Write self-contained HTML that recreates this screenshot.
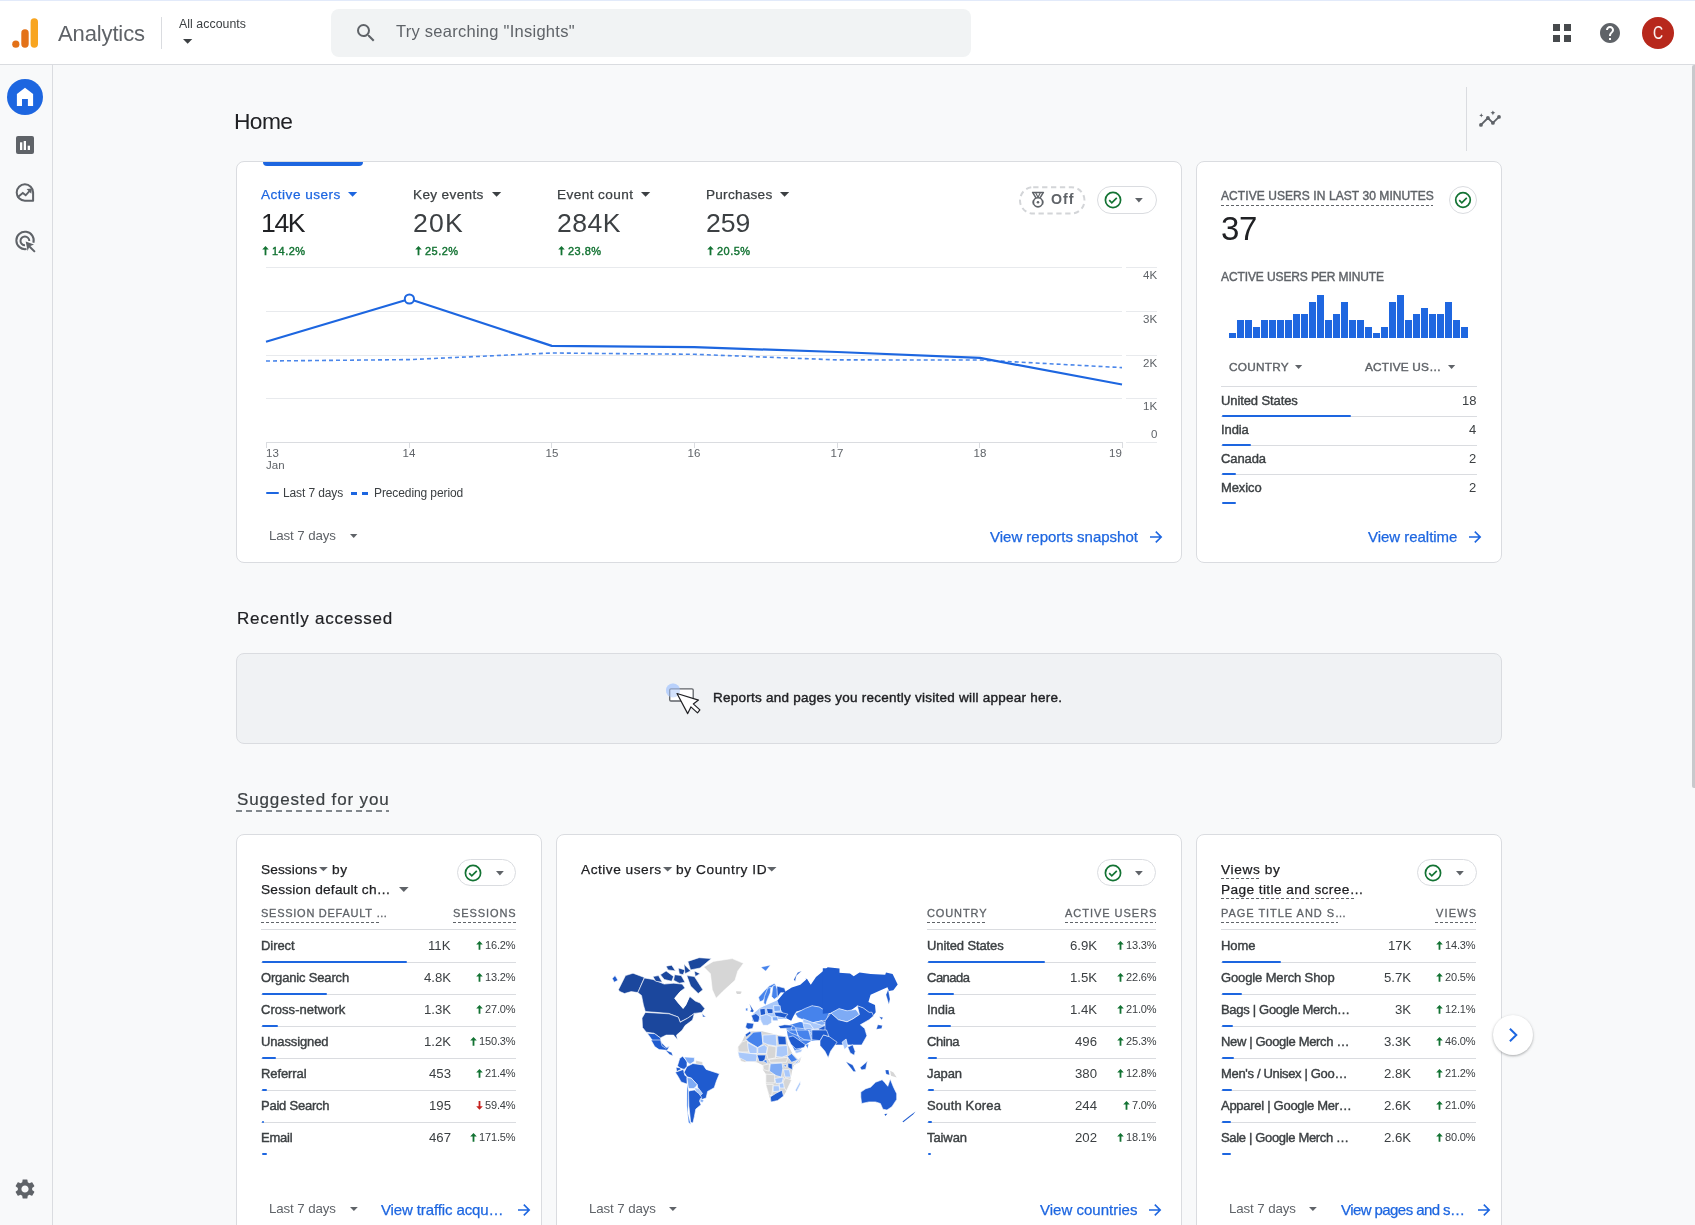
<!DOCTYPE html><html><head><meta charset="utf-8"><style>
html,body{margin:0;padding:0;}
body{width:1695px;height:1225px;overflow:hidden;position:relative;background:#f8f9fa;font-family:"Liberation Sans", sans-serif;}
.a{position:absolute;}
.t{position:absolute;line-height:1;white-space:nowrap;will-change:transform;}
svg{position:absolute;overflow:visible;}
</style></head><body>

<div class="a" style="left:0px;top:0px;width:1695px;height:64px;background:#fff;"></div>
<div class="a" style="left:0px;top:0px;width:1695px;height:1px;background:#e2eafa;"></div>
<div class="a" style="left:0px;top:64px;width:1695px;height:1px;background:#dadce0;"></div>
<svg style="left:0;top:0" width="60" height="64"><circle cx="15.8" cy="44.2" r="3.6" fill="#e37118"/><rect x="21.3" y="29.2" width="7.4" height="18.6" rx="3.7" fill="#e37118"/><rect x="30.6" y="18.2" width="7.4" height="29.6" rx="3.7" fill="#f8a520"/></svg>
<div class="t" style="top:22.88px;font-size:22px;color:#5f6368;letter-spacing:-0.129px;left:57.5px;">Analytics</div>
<div class="a" style="left:161px;top:17px;width:1px;height:32px;background:#dadce0;"></div>
<div class="t" style="top:17.89px;font-size:12.3px;color:#3c4043;letter-spacing:0.062px;left:179.2px;">All accounts</div>
<svg style="left:183.2px;top:38.5px" width="9.3" height="4.8" viewBox="0 0 9.3 4.8"><path d="M0 0H9.3L4.65 4.8z" fill="#3c4043"/></svg>
<div class="a" style="left:331px;top:9px;width:640px;height:48px;background:#f1f3f4;border-radius:8px;"></div>
<svg style="left:354px;top:21px" width="24" height="24" viewBox="0 0 24 24"><path fill="#5f6368" d="M15.5 14h-.79l-.28-.27A6.471 6.471 0 0 0 16 9.5 6.5 6.5 0 1 0 9.5 16c1.61 0 3.09-.59 4.23-1.57l.27.28v.79l5 4.99L20.49 19l-4.99-5zm-6 0C7.01 14 5 11.99 5 9.5S7.01 5 9.5 5 14 7.01 14 9.5 11.99 14 9.5 14z"/></svg>
<div class="t" style="top:22.53px;font-size:16.5px;color:#5f6368;letter-spacing:0.261px;left:395.5px;">Try searching "Insights"</div>
<div class="a" style="left:1553.1px;top:24.1px;width:6.7px;height:6.7px;background:#474a4d;"></div>
<div class="a" style="left:1553.1px;top:35.3px;width:6.7px;height:6.7px;background:#474a4d;"></div>
<div class="a" style="left:1564.3px;top:24.1px;width:6.7px;height:6.7px;background:#474a4d;"></div>
<div class="a" style="left:1564.3px;top:35.3px;width:6.7px;height:6.7px;background:#474a4d;"></div>
<svg style="left:1598px;top:21px" width="24" height="24" viewBox="0 0 24 24"><path fill="#5f6368" d="M12 2C6.48 2 2 6.48 2 12s4.48 10 10 10 10-4.48 10-10S17.52 2 12 2zm1 17h-2v-2h2v2zm2.07-7.75l-.9.92C13.45 12.9 13 13.5 13 15h-2v-.5c0-1.1.45-2.1 1.17-2.83l1.24-1.26c.37-.36.59-.86.59-1.41 0-1.1-.9-2-2-2s-2 .9-2 2H8c0-2.21 1.79-4 4-4s4 1.79 4 4c0 .88-.36 1.68-.93 2.25z"/></svg>
<div class="a" style="left:1642px;top:17px;width:32px;height:32px;background:#b7281c;border-radius:50%;"></div>
<div class="t" style="top:24.89px;font-size:17.5px;color:#fff;left:1458px;width:400px;text-align:center;transform:scaleX(0.8);">C</div>
<div class="a" style="left:52px;top:65px;width:1px;height:1160px;background:#dadce0;"></div>
<div class="a" style="left:7px;top:79px;width:36px;height:36px;background:#1d66e0;border-radius:50%;"></div>
<svg style="left:13px;top:85px" width="24" height="24" viewBox="0 0 24 24"><path fill="#fff" d="M3.9 21.1V9l8.1-6.2L20.1 9v12.1H14.9V14H9v7.1z"/></svg>
<svg style="left:13px;top:133px" width="24" height="24" viewBox="0 0 24 24"><rect x="3" y="3" width="18" height="18" rx="2" fill="#5f6368"/><rect x="7" y="9.3" width="2.3" height="7.7" fill="#fff"/><rect x="10.7" y="8" width="2.3" height="9" fill="#fff"/><rect x="14.7" y="12.7" width="2.3" height="4.3" fill="#fff"/></svg>
<svg style="left:13px;top:181px" width="24" height="24" viewBox="0 0 24 24"><path fill="none" stroke="#5f6368" stroke-width="2" stroke-linejoin="round" d="M11.9 19.7A8.2 8.2 0 1 1 20.1 11.5V19.7Z"/><path fill="none" stroke="#5f6368" stroke-width="1.9" d="M4.3 16.4L9.8 12l2.9 2.3 4.6-5.2"/><path fill="#5f6368" d="M18.9 7.4L13.6 8.1L18.3 12.8z"/></svg>
<svg style="left:13px;top:229px" width="24" height="24" viewBox="0 0 24 24"><path fill="none" stroke="#5f6368" stroke-width="2" d="M20.4 13.8A8.7 8.7 0 1 0 13.5 20"/><path fill="none" stroke="#5f6368" stroke-width="2" d="M16.3 12A4.4 4.4 0 1 0 12 16.3"/><path fill="#5f6368" d="M12.7 12.6L21 15.6 17.4 17 22.6 22.2 21.2 23.6 16 18.4 14.6 22z"/></svg>
<svg style="left:13px;top:1177px" width="24" height="24" viewBox="0 0 24 24"><path fill="#5f6368" d="M19.14 12.94c.04-.3.06-.61.06-.94 0-.32-.02-.64-.07-.94l2.03-1.58a.49.49 0 0 0 .12-.61l-1.920-3.32a.488.488 0 0 0-.59-.22l-2.39.96c-.5-.38-1.03-.7-1.62-.94l-.36-2.54a.484.484 0 0 0-.48-.41h-3.84c-.24 0-.43.17-.47.41l-.36 2.54c-.59.24-1.130.57-1.62.94l-2.39-.96c-.22-.08-.47 0-.59.22L2.74 8.87c-.12.21-.08.47.12.61l2.03 1.58c-.05.3-.09.63-.09.94s.02.64.07.94l-2.03 1.58a.49.49 0 0 0-.12.61l1.92 3.32c.12.22.37.29.59.22l2.39-.96c.5.38 1.03.7 1.62.94l.36 2.54c.05.24.24.41.48.41h3.84c.24 0 .44-.17.47-.41l.36-2.54c.59-.24 1.13-.56 1.62-.94l2.39.96c.22.08.47 0 .59-.22l1.92-3.32c.12-.22.07-.47-.12-.61l-2.010-1.58zM12 15.6c-1.98 0-3.6-1.62-3.6-3.6s1.62-3.6 3.6-3.6 3.6 1.62 3.6 3.6-1.62 3.6-3.6 3.6z"/></svg>
<div class="a" style="left:1691.5px;top:65px;width:3.5px;height:723px;background:#c8c9cc;border-radius:2px 0 0 2px;"></div>
<div class="t" style="top:110.40px;font-size:22.8px;color:#202124;letter-spacing:-0.605px;left:233.5px;">Home</div>
<div class="a" style="left:1466px;top:87px;width:1px;height:64px;background:#dadce0;"></div>
<svg style="left:1476px;top:108px" width="28" height="22" viewBox="0 0 28 22"><path fill="none" stroke="#5f6368" stroke-width="1.8" stroke-linejoin="round" d="M4.95 16.96L11.9 10l5 4.9 6.1-6"/><circle cx="4.95" cy="16.96" r="1.9" fill="#5f6368"/><circle cx="11.9" cy="10" r="1.9" fill="#5f6368"/><circle cx="16.9" cy="14.9" r="1.9" fill="#5f6368"/><circle cx="23" cy="8.9" r="1.9" fill="#5f6368"/><path fill="#5f6368" d="M5.3 5.3l.6 1.5 1.5.6-1.5.6-.6 1.5-.6-1.5-1.5-.6 1.5-.6z"/><path fill="#5f6368" d="M16.9 2.4l.8 1.6 1.6.8-1.6.8-.8 1.6-.8-1.6-1.6-.8 1.6-.8z"/></svg>
<div class="a" style="left:236px;top:161px;width:946px;height:402px;background:#fff;border:1px solid #dadce0;border-radius:8px;box-sizing:border-box;"></div>
<div class="a" style="left:263px;top:162px;width:100px;height:4px;background:#1d66e0;border-radius:0 0 4px 4px;"></div>
<div class="t" style="top:187.79px;font-size:13.6px;color:#1d66e0;-webkit-text-stroke:0.25px #1d66e0;letter-spacing:0.485px;left:261px;">Active users</div>
<svg style="left:348px;top:192.2px" width="9.2" height="4.8" viewBox="0 0 9.2 4.8"><path d="M0 0H9.2L4.6 4.8z" fill="#1d66e0"/></svg>
<div class="t" style="top:210.28px;font-size:26.6px;color:#202124;letter-spacing:-1.364px;left:261px;">14K</div>
<svg style="left:262.2px;top:246.4px" width="7" height="9.2" viewBox="0 0 7 9.2"><path fill="#137333" d="M3.5 0L6.8 3.6H4.4V9.2H2.6V3.6H0.2z"/></svg>
<div class="t" style="top:245.59px;font-size:11px;color:#137333;-webkit-text-stroke:0.4px #137333;letter-spacing:0.453px;left:272.4px;">14.2%</div>
<div class="t" style="top:187.79px;font-size:13.6px;color:#3c4043;-webkit-text-stroke:0.25px #3c4043;letter-spacing:0.347px;left:413.4px;">Key events</div>
<svg style="left:492px;top:192.2px" width="9.2" height="4.8" viewBox="0 0 9.2 4.8"><path d="M0 0H9.2L4.6 4.8z" fill="#3c4043"/></svg>
<div class="t" style="top:210.28px;font-size:26.6px;color:#3c4043;letter-spacing:1.236px;left:413.4px;">20K</div>
<svg style="left:414.59999999999997px;top:246.4px" width="7" height="9.2" viewBox="0 0 7 9.2"><path fill="#137333" d="M3.5 0L6.8 3.6H4.4V9.2H2.6V3.6H0.2z"/></svg>
<div class="t" style="top:245.59px;font-size:11px;color:#137333;-webkit-text-stroke:0.4px #137333;letter-spacing:0.453px;left:424.79999999999995px;">25.2%</div>
<div class="t" style="top:187.79px;font-size:13.6px;color:#3c4043;-webkit-text-stroke:0.25px #3c4043;letter-spacing:0.418px;left:556.9px;">Event count</div>
<svg style="left:640.7px;top:192.2px" width="9.2" height="4.8" viewBox="0 0 9.2 4.8"><path d="M0 0H9.2L4.6 4.8z" fill="#3c4043"/></svg>
<div class="t" style="top:210.28px;font-size:26.6px;color:#3c4043;letter-spacing:0.494px;left:556.9px;">284K</div>
<svg style="left:558.1px;top:246.4px" width="7" height="9.2" viewBox="0 0 7 9.2"><path fill="#137333" d="M3.5 0L6.8 3.6H4.4V9.2H2.6V3.6H0.2z"/></svg>
<div class="t" style="top:245.59px;font-size:11px;color:#137333;-webkit-text-stroke:0.4px #137333;letter-spacing:0.453px;left:568.3px;">23.8%</div>
<div class="t" style="top:187.79px;font-size:13.6px;color:#3c4043;-webkit-text-stroke:0.25px #3c4043;letter-spacing:0.244px;left:706px;">Purchases</div>
<svg style="left:780px;top:192.2px" width="9.2" height="4.8" viewBox="0 0 9.2 4.8"><path d="M0 0H9.2L4.6 4.8z" fill="#3c4043"/></svg>
<div class="t" style="top:210.28px;font-size:26.6px;color:#3c4043;letter-spacing:0.012px;left:706px;">259</div>
<svg style="left:707.2px;top:246.4px" width="7" height="9.2" viewBox="0 0 7 9.2"><path fill="#137333" d="M3.5 0L6.8 3.6H4.4V9.2H2.6V3.6H0.2z"/></svg>
<div class="t" style="top:245.59px;font-size:11px;color:#137333;-webkit-text-stroke:0.4px #137333;letter-spacing:0.453px;left:717.4px;">20.5%</div>
<svg style="left:1015px;top:182px" width="80" height="36" viewBox="0 0 80 36"><rect x="5" y="5.2" width="64.5" height="26.4" rx="13.2" fill="none" stroke="#d3d5d8" stroke-width="2" stroke-dasharray="5.3 3.6"/></svg>
<svg style="left:1029px;top:190px" width="18" height="18" viewBox="0 0 18 18"><path d="M3.6 2.4h10.8L10.6 8.6H7.4z" fill="none" stroke="#5f6368" stroke-width="1.5" stroke-linejoin="round"/><path d="M6.6 2.6L9 7.4 11.4 2.6" fill="none" stroke="#5f6368" stroke-width="1.2"/><circle cx="9" cy="12.3" r="4.6" fill="#fff" stroke="#5f6368" stroke-width="1.6"/><path d="M4.4 10.2a5.5 5.5 0 0 0 0 4.2M13.6 10.2a5.5 5.5 0 0 1 0 4.2" fill="none" stroke="#5f6368" stroke-width="1.2"/><circle cx="9" cy="12.3" r="1.3" fill="#5f6368"/></svg>
<div class="t" style="top:192.28px;font-size:14.2px;color:#5f6368;font-weight:700;letter-spacing:1.049px;left:1051.3px;">Off</div>
<div class="a" style="left:1097.1px;top:186.2px;width:59.5px;height:27.4px;border:1px solid #dadce0;border-radius:14px;box-sizing:border-box;background:#fff;"></div>
<svg style="left:1103.1px;top:189.89999999999998px" width="20" height="20" viewBox="0 0 20 20"><circle cx="10" cy="10" r="7.6" fill="none" stroke="#137333" stroke-width="1.7"/><path d="M6.2 10.2l2.6 2.6 5-5" fill="none" stroke="#137333" stroke-width="1.7"/></svg>
<svg style="left:1135.3999999999999px;top:198.0px" width="7.8" height="4.4" viewBox="0 0 7.8 4.4"><path d="M0 0H7.8L3.9 4.4z" fill="#5f6368"/></svg>
<div class="a" style="left:266px;top:266.9px;width:856px;height:1px;background:#e8eaed;"></div>
<div class="a" style="left:1126px;top:266.9px;width:31px;height:1px;background:#e8eaed;"></div>
<div class="a" style="left:266px;top:310.7px;width:856px;height:1px;background:#e8eaed;"></div>
<div class="a" style="left:1126px;top:310.7px;width:31px;height:1px;background:#e8eaed;"></div>
<div class="a" style="left:266px;top:354.6px;width:856px;height:1px;background:#e8eaed;"></div>
<div class="a" style="left:1126px;top:354.6px;width:31px;height:1px;background:#e8eaed;"></div>
<div class="a" style="left:266px;top:398.0px;width:856px;height:1px;background:#e8eaed;"></div>
<div class="a" style="left:1126px;top:398.0px;width:31px;height:1px;background:#e8eaed;"></div>
<div class="a" style="left:266px;top:441.7px;width:856px;height:1px;background:#dadce0;"></div>
<div class="a" style="left:1126px;top:441.7px;width:31px;height:1px;background:#e8eaed;"></div>
<div class="t" style="top:269.77px;font-size:11.5px;color:#5f6368;right:538.00px;text-align:right;">4K</div>
<div class="t" style="top:313.77px;font-size:11.5px;color:#5f6368;right:538.00px;text-align:right;">3K</div>
<div class="t" style="top:357.77px;font-size:11.5px;color:#5f6368;right:538.00px;text-align:right;">2K</div>
<div class="t" style="top:401.27px;font-size:11.5px;color:#5f6368;right:538.00px;text-align:right;">1K</div>
<div class="t" style="top:429.07px;font-size:11.5px;color:#5f6368;right:538.00px;text-align:right;">0</div>
<div class="a" style="left:265.5px;top:442px;width:1px;height:5.5px;background:#dadce0;"></div>
<div class="a" style="left:408.9px;top:442px;width:1px;height:5.5px;background:#dadce0;"></div>
<div class="a" style="left:551.3px;top:442px;width:1px;height:5.5px;background:#dadce0;"></div>
<div class="a" style="left:693.9px;top:442px;width:1px;height:5.5px;background:#dadce0;"></div>
<div class="a" style="left:836.8px;top:442px;width:1px;height:5.5px;background:#dadce0;"></div>
<div class="a" style="left:979.4px;top:442px;width:1px;height:5.5px;background:#dadce0;"></div>
<div class="a" style="left:1121.5px;top:442px;width:1px;height:5.5px;background:#dadce0;"></div>
<div class="t" style="top:448.07px;font-size:11.5px;color:#5f6368;left:266px;">13</div>
<div class="t" style="top:448.07px;font-size:11.5px;color:#5f6368;left:209.39999999999998px;width:400px;text-align:center;">14</div>
<div class="t" style="top:448.07px;font-size:11.5px;color:#5f6368;left:351.79999999999995px;width:400px;text-align:center;">15</div>
<div class="t" style="top:448.07px;font-size:11.5px;color:#5f6368;left:494.4px;width:400px;text-align:center;">16</div>
<div class="t" style="top:448.07px;font-size:11.5px;color:#5f6368;left:637.3px;width:400px;text-align:center;">17</div>
<div class="t" style="top:448.07px;font-size:11.5px;color:#5f6368;left:779.9px;width:400px;text-align:center;">18</div>
<div class="t" style="top:448.07px;font-size:11.5px;color:#5f6368;right:573.00px;text-align:right;">19</div>
<div class="t" style="top:460.27px;font-size:11.5px;color:#5f6368;left:266px;">Jan</div>
<svg style="left:0;top:0" width="1695" height="1225"><polyline points="266,361 409.4,359.6 551.8,353 694.4,354.3 837.3,359.9 979.9,360 1122,367.6" fill="none" stroke="#4a86ea" stroke-width="1.6" stroke-dasharray="4,3"/><polyline points="266,341.7 409.4,299 551.8,345.9 694.4,347.2 837.3,352 979.9,357.9 1122,384.5" fill="none" stroke="#1d66e0" stroke-width="2.2" stroke-linejoin="round"/><circle cx="409.4" cy="299" r="4.6" fill="#fff" stroke="#1d66e0" stroke-width="2"/></svg>
<div class="a" style="left:266px;top:492.2px;width:13.2px;height:2.3px;background:#1d66e0;border-radius:1px;"></div>
<div class="t" style="top:486.64px;font-size:12px;color:#3c4043;letter-spacing:-0.117px;left:283px;">Last 7 days</div>
<div class="a" style="left:351px;top:492px;width:5.6px;height:2.6px;background:#1d66e0;"></div>
<div class="a" style="left:362.2px;top:492px;width:5.6px;height:2.6px;background:#1d66e0;"></div>
<div class="t" style="top:486.64px;font-size:12px;color:#3c4043;letter-spacing:-0.101px;left:374.4px;">Preceding period</div>
<div class="t" style="top:528.74px;font-size:13.3px;color:#5f6368;letter-spacing:-0.111px;left:269.1px;">Last 7 days</div>
<svg style="left:350.2px;top:534px" width="7.4" height="4" viewBox="0 0 7.4 4"><path d="M0 0H7.4L3.7 4z" fill="#5f6368"/></svg>
<div class="t" style="top:528.90px;font-size:15px;color:#1d66e0;-webkit-text-stroke:0.25px #1d66e0;letter-spacing:-0.011px;left:989.6px;">View reports snapshot</div>
<svg style="left:1149px;top:529.5px" width="14" height="14" viewBox="0 0 14 14"><path d="M1 7h11.2M6.8 1.6L12.2 7l-5.4 5.4" fill="none" stroke="#1d66e0" stroke-width="1.6"/></svg>
<div class="a" style="left:1196px;top:161px;width:306px;height:402px;background:#fff;border:1px solid #dadce0;border-radius:8px;box-sizing:border-box;"></div>
<div class="t" style="top:190.34px;font-size:12px;color:#5f6368;-webkit-text-stroke:0.4px #5f6368;letter-spacing:0.077px;left:1221px;">ACTIVE USERS IN LAST 30 MINUTES</div>
<div class="a" style="left:1221px;top:204.8px;width:212px;height:1.2px;background-image:linear-gradient(90deg,#5f6368 3px,transparent 3px);background-size:5px 1.2px;"></div>
<div class="a" style="left:1449px;top:186px;width:28px;height:28px;border:1px solid #dadce0;border-radius:50%;box-sizing:border-box;background:#fff;"></div>
<svg style="left:1453px;top:190px" width="20" height="20" viewBox="0 0 20 20"><circle cx="10" cy="10" r="7.3" fill="none" stroke="#137333" stroke-width="1.7"/><path d="M6.2 10.2l2.6 2.6 5-5" fill="none" stroke="#137333" stroke-width="1.7"/></svg>
<div class="t" style="top:212.37px;font-size:33px;color:#202124;letter-spacing:-0.302px;left:1220.9px;">37</div>
<div class="t" style="top:271.14px;font-size:12px;color:#5f6368;-webkit-text-stroke:0.4px #5f6368;letter-spacing:-0.107px;left:1221px;">ACTIVE USERS PER MINUTE</div>
<div class="a" style="left:1229px;top:333.0px;width:7px;height:5.0px;background:#1f67e0;"></div>
<div class="a" style="left:1237px;top:320.4px;width:7px;height:17.599999999999998px;background:#1f67e0;"></div>
<div class="a" style="left:1245px;top:320.4px;width:7px;height:17.599999999999998px;background:#1f67e0;"></div>
<div class="a" style="left:1253px;top:326.7px;width:7px;height:11.299999999999999px;background:#1f67e0;"></div>
<div class="a" style="left:1261px;top:320.4px;width:7px;height:17.599999999999998px;background:#1f67e0;"></div>
<div class="a" style="left:1269px;top:320.4px;width:7px;height:17.599999999999998px;background:#1f67e0;"></div>
<div class="a" style="left:1277px;top:320.4px;width:7px;height:17.599999999999998px;background:#1f67e0;"></div>
<div class="a" style="left:1285px;top:320.4px;width:7px;height:17.599999999999998px;background:#1f67e0;"></div>
<div class="a" style="left:1293px;top:314.1px;width:7px;height:23.9px;background:#1f67e0;"></div>
<div class="a" style="left:1301px;top:314.1px;width:7px;height:23.9px;background:#1f67e0;"></div>
<div class="a" style="left:1309px;top:301.5px;width:7px;height:36.5px;background:#1f67e0;"></div>
<div class="a" style="left:1317px;top:295.2px;width:7px;height:42.800000000000004px;background:#1f67e0;"></div>
<div class="a" style="left:1325px;top:320.4px;width:7px;height:17.599999999999998px;background:#1f67e0;"></div>
<div class="a" style="left:1333px;top:314.1px;width:7px;height:23.9px;background:#1f67e0;"></div>
<div class="a" style="left:1341px;top:301.5px;width:7px;height:36.5px;background:#1f67e0;"></div>
<div class="a" style="left:1349px;top:320.4px;width:7px;height:17.599999999999998px;background:#1f67e0;"></div>
<div class="a" style="left:1357px;top:320.4px;width:7px;height:17.599999999999998px;background:#1f67e0;"></div>
<div class="a" style="left:1365px;top:326.7px;width:7px;height:11.299999999999999px;background:#1f67e0;"></div>
<div class="a" style="left:1373px;top:333.0px;width:7px;height:5.0px;background:#1f67e0;"></div>
<div class="a" style="left:1381px;top:326.7px;width:7px;height:11.299999999999999px;background:#1f67e0;"></div>
<div class="a" style="left:1389px;top:301.5px;width:7px;height:36.5px;background:#1f67e0;"></div>
<div class="a" style="left:1397px;top:295.2px;width:7px;height:42.800000000000004px;background:#1f67e0;"></div>
<div class="a" style="left:1405px;top:320.4px;width:7px;height:17.599999999999998px;background:#1f67e0;"></div>
<div class="a" style="left:1413px;top:314.1px;width:7px;height:23.9px;background:#1f67e0;"></div>
<div class="a" style="left:1421px;top:307.8px;width:7px;height:30.2px;background:#1f67e0;"></div>
<div class="a" style="left:1429px;top:314.1px;width:7px;height:23.9px;background:#1f67e0;"></div>
<div class="a" style="left:1437px;top:314.1px;width:7px;height:23.9px;background:#1f67e0;"></div>
<div class="a" style="left:1445px;top:301.5px;width:7px;height:36.5px;background:#1f67e0;"></div>
<div class="a" style="left:1453px;top:320.4px;width:7px;height:17.599999999999998px;background:#1f67e0;"></div>
<div class="a" style="left:1461px;top:326.7px;width:7px;height:11.299999999999999px;background:#1f67e0;"></div>
<div class="t" style="top:361.81px;font-size:11.8px;color:#5f6368;-webkit-text-stroke:0.4px #5f6368;letter-spacing:0.245px;left:1228.7px;">COUNTRY</div>
<svg style="left:1295px;top:365.2px" width="7.2" height="4" viewBox="0 0 7.2 4"><path d="M0 0H7.2L3.6 4z" fill="#5f6368"/></svg>
<div class="t" style="top:361.81px;font-size:11.8px;color:#5f6368;-webkit-text-stroke:0.4px #5f6368;letter-spacing:0.212px;left:1364.8px;">ACTIVE US…</div>
<svg style="left:1448px;top:365.2px" width="7.2" height="4" viewBox="0 0 7.2 4"><path d="M0 0H7.2L3.6 4z" fill="#5f6368"/></svg>
<div class="a" style="left:1221px;top:386px;width:256px;height:1px;background:#dadce0;"></div>
<div class="t" style="top:394.10px;font-size:13px;color:#3c4043;-webkit-text-stroke:0.4px #3c4043;letter-spacing:-0.100px;left:1221px;">United States</div>
<div class="t" style="top:394.10px;font-size:13px;color:#3c4043;right:218.50px;text-align:right;">18</div>
<div class="a" style="left:1221px;top:416.0px;width:256px;height:1px;background:#dadce0;"></div>
<div class="a" style="left:1222px;top:415.3px;width:128.5px;height:2px;background:#1d66e0;border-radius:1px;"></div>
<div class="t" style="top:423.10px;font-size:13px;color:#3c4043;-webkit-text-stroke:0.4px #3c4043;letter-spacing:-0.100px;left:1221px;">India</div>
<div class="t" style="top:423.10px;font-size:13px;color:#3c4043;right:218.50px;text-align:right;">4</div>
<div class="a" style="left:1221px;top:445.0px;width:256px;height:1px;background:#dadce0;"></div>
<div class="a" style="left:1222px;top:444.3px;width:28.5px;height:2px;background:#1d66e0;border-radius:1px;"></div>
<div class="t" style="top:452.10px;font-size:13px;color:#3c4043;-webkit-text-stroke:0.4px #3c4043;letter-spacing:-0.100px;left:1221px;">Canada</div>
<div class="t" style="top:452.10px;font-size:13px;color:#3c4043;right:218.50px;text-align:right;">2</div>
<div class="a" style="left:1221px;top:474.0px;width:256px;height:1px;background:#dadce0;"></div>
<div class="a" style="left:1222px;top:473.3px;width:14px;height:2px;background:#1d66e0;border-radius:1px;"></div>
<div class="t" style="top:481.10px;font-size:13px;color:#3c4043;-webkit-text-stroke:0.4px #3c4043;letter-spacing:-0.100px;left:1221px;">Mexico</div>
<div class="t" style="top:481.10px;font-size:13px;color:#3c4043;right:218.50px;text-align:right;">2</div>
<div class="a" style="left:1222px;top:502.3px;width:14px;height:2px;background:#1d66e0;border-radius:1px;"></div>
<div class="t" style="top:528.90px;font-size:15px;color:#1d66e0;-webkit-text-stroke:0.25px #1d66e0;letter-spacing:-0.029px;left:1367.9px;">View realtime</div>
<svg style="left:1468px;top:529.5px" width="14" height="14" viewBox="0 0 14 14"><path d="M1 7h11.2M6.8 1.6L12.2 7l-5.4 5.4" fill="none" stroke="#1d66e0" stroke-width="1.6"/></svg>
<div class="t" style="top:610.21px;font-size:17px;color:#202124;-webkit-text-stroke:0.2px #202124;letter-spacing:0.789px;left:237.2px;">Recently accessed</div>
<div class="a" style="left:236px;top:653px;width:1266px;height:91px;background:#f0f2f4;border:1px solid #dadce0;border-radius:8px;box-sizing:border-box;"></div>
<svg style="left:650px;top:670px" width="80" height="60" viewBox="0 0 80 60"><circle cx="23" cy="20.5" r="7" fill="#c6dafc"/><rect x="19.7" y="18.8" width="23.5" height="12.2" rx="1.3" fill="#fff" stroke="#5f6368" stroke-width="1.3"/><circle cx="23" cy="20.5" r="7" fill="#aecbfa" opacity="0.55"/><path d="M27 23.5l21.5 6.6-5.2 3.8 6.6 6-2.4 3-6.6-6-3.2 6.7z" fill="#fff" stroke="#202124" stroke-width="1.2" stroke-linejoin="round"/></svg>
<div class="t" style="top:691.37px;font-size:13.5px;color:#202124;-webkit-text-stroke:0.4px #202124;letter-spacing:0.247px;left:712.5px;">Reports and pages you recently visited will appear here.</div>
<div class="t" style="top:791.11px;font-size:17px;color:#3c4043;-webkit-text-stroke:0.2px #3c4043;letter-spacing:0.858px;left:237.2px;">Suggested for you</div>
<div class="a" style="left:236.1px;top:810.2px;width:153px;height:1.6px;background-image:linear-gradient(90deg,#80868b 6px,transparent 6px);background-size:10px 1.6px;"></div>
<div class="a" style="left:236px;top:834px;width:306px;height:400px;background:#fff;border:1px solid #dadce0;border-radius:8px;box-sizing:border-box;"></div>
<div class="t" style="top:863.00px;font-size:13.7px;color:#202124;-webkit-text-stroke:0.25px #202124;letter-spacing:0.087px;left:260.9px;">Sessions</div>
<svg style="left:318.7px;top:867.4px" width="8.8" height="4.3" viewBox="0 0 8.8 4.3"><path d="M0 0H8.8L4.4 4.3z" fill="#5f6368"/></svg>
<div class="t" style="top:863.00px;font-size:13.7px;color:#202124;-webkit-text-stroke:0.25px #202124;letter-spacing:0.732px;left:331.8px;">by</div>
<div class="t" style="top:882.90px;font-size:13.7px;color:#202124;-webkit-text-stroke:0.25px #202124;letter-spacing:0.214px;left:260.9px;">Session default ch…</div>
<svg style="left:399.1px;top:886.8px" width="9.6" height="5" viewBox="0 0 9.6 5"><path d="M0 0H9.6L4.8 5z" fill="#5f6368"/></svg>
<div class="a" style="left:457.2px;top:859.3px;width:59.3px;height:27.2px;border:1px solid #dadce0;border-radius:14px;box-sizing:border-box;background:#fff;"></div>
<svg style="left:463.2px;top:862.9px" width="20" height="20" viewBox="0 0 20 20"><circle cx="10" cy="10" r="7.6" fill="none" stroke="#137333" stroke-width="1.7"/><path d="M6.2 10.2l2.6 2.6 5-5" fill="none" stroke="#137333" stroke-width="1.7"/></svg>
<svg style="left:495.5px;top:871.0999999999999px" width="7.8" height="4.4" viewBox="0 0 7.8 4.4"><path d="M0 0H7.8L3.9 4.4z" fill="#5f6368"/></svg>
<div class="t" style="top:908.19px;font-size:11px;color:#5f6368;-webkit-text-stroke:0.3px #5f6368;letter-spacing:0.737px;left:260.9px;">SESSION DEFAULT …</div>
<div class="a" style="left:260.9px;top:921.8px;width:118.3px;height:1.2px;background-image:linear-gradient(90deg,#5f6368 3px,transparent 3px);background-size:5px 1.2px;"></div>
<div class="t" style="top:908.19px;font-size:11px;color:#5f6368;-webkit-text-stroke:0.3px #5f6368;letter-spacing:0.908px;right:1178.09px;text-align:right;">SESSIONS</div>
<div class="a" style="left:453px;top:921.8px;width:63px;height:1.2px;background-image:linear-gradient(90deg,#5f6368 3px,transparent 3px);background-size:5px 1.2px;"></div>
<div class="a" style="left:260.9px;top:929px;width:255.10000000000002px;height:1px;background:#dadce0;"></div>
<div class="t" style="top:939.20px;font-size:13px;color:#3c4043;-webkit-text-stroke:0.4px #3c4043;letter-spacing:-0.069px;left:260.9px;">Direct</div>
<div class="t" style="top:939.03px;font-size:13.2px;color:#3c4043;right:1244.20px;text-align:right;">11K</div>
<div class="t" style="top:939.89px;font-size:11px;color:#3c4043;letter-spacing:-0.150px;right:1179.15px;text-align:right;">16.2%</div>
<svg style="left:476.4115625px;top:941.1px" width="7" height="8.8" viewBox="0 0 7 8.8"><path fill="#137333" d="M3.5 0L6.8 3.6H4.4V8.8H2.6V3.6H0.2z"/></svg>
<div class="a" style="left:260.9px;top:962.1px;width:255.10000000000002px;height:1px;background:#dadce0;"></div>
<div class="a" style="left:261.9px;top:960.9px;width:145.5px;height:2.1px;background:#1d66e0;border-radius:1px;"></div>
<div class="t" style="top:971.20px;font-size:13px;color:#3c4043;-webkit-text-stroke:0.4px #3c4043;letter-spacing:-0.170px;left:260.9px;">Organic Search</div>
<div class="t" style="top:971.03px;font-size:13.2px;color:#3c4043;right:1244.20px;text-align:right;">4.8K</div>
<div class="t" style="top:971.89px;font-size:11px;color:#3c4043;letter-spacing:-0.150px;right:1179.15px;text-align:right;">13.2%</div>
<svg style="left:476.4115625px;top:973.1px" width="7" height="8.8" viewBox="0 0 7 8.8"><path fill="#137333" d="M3.5 0L6.8 3.6H4.4V8.8H2.6V3.6H0.2z"/></svg>
<div class="a" style="left:260.9px;top:994.1px;width:255.10000000000002px;height:1px;background:#dadce0;"></div>
<div class="a" style="left:261.9px;top:992.9px;width:65px;height:2.1px;background:#1d66e0;border-radius:1px;"></div>
<div class="t" style="top:1003.20px;font-size:13px;color:#3c4043;-webkit-text-stroke:0.4px #3c4043;letter-spacing:0.042px;left:260.9px;">Cross-network</div>
<div class="t" style="top:1003.03px;font-size:13.2px;color:#3c4043;right:1244.20px;text-align:right;">1.3K</div>
<div class="t" style="top:1003.89px;font-size:11px;color:#3c4043;letter-spacing:-0.150px;right:1179.15px;text-align:right;">27.0%</div>
<svg style="left:476.4115625px;top:1005.1px" width="7" height="8.8" viewBox="0 0 7 8.8"><path fill="#137333" d="M3.5 0L6.8 3.6H4.4V8.8H2.6V3.6H0.2z"/></svg>
<div class="a" style="left:260.9px;top:1026.1px;width:255.10000000000002px;height:1px;background:#dadce0;"></div>
<div class="a" style="left:261.9px;top:1024.9px;width:16.5px;height:2.1px;background:#1d66e0;border-radius:1px;"></div>
<div class="t" style="top:1035.20px;font-size:13px;color:#3c4043;-webkit-text-stroke:0.4px #3c4043;letter-spacing:-0.128px;left:260.9px;">Unassigned</div>
<div class="t" style="top:1035.03px;font-size:13.2px;color:#3c4043;right:1244.20px;text-align:right;">1.2K</div>
<div class="t" style="top:1035.89px;font-size:11px;color:#3c4043;letter-spacing:-0.150px;right:1179.15px;text-align:right;">150.3%</div>
<svg style="left:470.44453125px;top:1037.1000000000001px" width="7" height="8.8" viewBox="0 0 7 8.8"><path fill="#137333" d="M3.5 0L6.8 3.6H4.4V8.8H2.6V3.6H0.2z"/></svg>
<div class="a" style="left:260.9px;top:1058.1000000000001px;width:255.10000000000002px;height:1px;background:#dadce0;"></div>
<div class="a" style="left:261.9px;top:1056.9px;width:14.5px;height:2.1px;background:#1d66e0;border-radius:1px;"></div>
<div class="t" style="top:1067.20px;font-size:13px;color:#3c4043;-webkit-text-stroke:0.4px #3c4043;letter-spacing:-0.090px;left:260.9px;">Referral</div>
<div class="t" style="top:1067.03px;font-size:13.2px;color:#3c4043;right:1244.20px;text-align:right;">453</div>
<div class="t" style="top:1067.89px;font-size:11px;color:#3c4043;letter-spacing:-0.150px;right:1179.15px;text-align:right;">21.4%</div>
<svg style="left:476.4115625px;top:1069.1000000000001px" width="7" height="8.8" viewBox="0 0 7 8.8"><path fill="#137333" d="M3.5 0L6.8 3.6H4.4V8.8H2.6V3.6H0.2z"/></svg>
<div class="a" style="left:260.9px;top:1090.1000000000001px;width:255.10000000000002px;height:1px;background:#dadce0;"></div>
<div class="a" style="left:261.9px;top:1088.9px;width:5.5px;height:2.1px;background:#1d66e0;border-radius:1px;"></div>
<div class="t" style="top:1099.20px;font-size:13px;color:#3c4043;-webkit-text-stroke:0.4px #3c4043;letter-spacing:-0.232px;left:260.9px;">Paid Search</div>
<div class="t" style="top:1099.03px;font-size:13.2px;color:#3c4043;right:1244.20px;text-align:right;">195</div>
<div class="t" style="top:1099.89px;font-size:11px;color:#3c4043;letter-spacing:-0.150px;right:1179.15px;text-align:right;">59.4%</div>
<svg style="left:476.4115625px;top:1101.1000000000001px" width="7" height="8.8" viewBox="0 0 7 8.8"><path fill="#c5221f" d="M3.5 8.8L6.8 5.200000000000001H4.4V0H2.6V5.200000000000001H0.2z"/></svg>
<div class="a" style="left:260.9px;top:1122.1000000000001px;width:255.10000000000002px;height:1px;background:#dadce0;"></div>
<div class="a" style="left:261.9px;top:1120.9px;width:2px;height:2.1px;background:#1d66e0;border-radius:1px;"></div>
<div class="t" style="top:1131.20px;font-size:13px;color:#3c4043;-webkit-text-stroke:0.4px #3c4043;letter-spacing:-0.202px;left:260.9px;">Email</div>
<div class="t" style="top:1131.03px;font-size:13.2px;color:#3c4043;right:1244.20px;text-align:right;">467</div>
<div class="t" style="top:1131.89px;font-size:11px;color:#3c4043;letter-spacing:-0.150px;right:1179.15px;text-align:right;">171.5%</div>
<svg style="left:470.44453125px;top:1133.1000000000001px" width="7" height="8.8" viewBox="0 0 7 8.8"><path fill="#137333" d="M3.5 0L6.8 3.6H4.4V8.8H2.6V3.6H0.2z"/></svg>
<div class="a" style="left:261.9px;top:1152.9px;width:5.5px;height:2.1px;background:#1d66e0;border-radius:1px;"></div>
<div class="t" style="top:1202.04px;font-size:13.3px;color:#5f6368;letter-spacing:-0.111px;left:269.1px;">Last 7 days</div>
<svg style="left:350px;top:1207px" width="7.8" height="4" viewBox="0 0 7.8 4"><path d="M0 0H7.8L3.9 4z" fill="#5f6368"/></svg>
<div class="t" style="top:1202.10px;font-size:15px;color:#1d66e0;-webkit-text-stroke:0.25px #1d66e0;letter-spacing:-0.118px;left:381px;">View traffic acqu…</div>
<svg style="left:517px;top:1203px" width="14" height="14" viewBox="0 0 14 14"><path d="M1 7h11.2M6.8 1.6L12.2 7l-5.4 5.4" fill="none" stroke="#1d66e0" stroke-width="1.6"/></svg>
<div class="a" style="left:556px;top:834px;width:626px;height:400px;background:#fff;border:1px solid #dadce0;border-radius:8px;box-sizing:border-box;"></div>
<div class="t" style="top:863.00px;font-size:13.7px;color:#202124;-webkit-text-stroke:0.25px #202124;letter-spacing:0.499px;left:581.1px;">Active users</div>
<svg style="left:662.5px;top:867px" width="9.3" height="4.4" viewBox="0 0 9.3 4.4"><path d="M0 0H9.3L4.65 4.4z" fill="#5f6368"/></svg>
<div class="t" style="top:863.00px;font-size:13.7px;color:#202124;-webkit-text-stroke:0.25px #202124;letter-spacing:0.579px;left:675.8px;">by Country ID</div>
<svg style="left:767.4px;top:867px" width="9.5" height="4.4" viewBox="0 0 9.5 4.4"><path d="M0 0H9.5L4.75 4.4z" fill="#5f6368"/></svg>
<div class="a" style="left:1097px;top:859.3px;width:59.3px;height:27.2px;border:1px solid #dadce0;border-radius:14px;box-sizing:border-box;background:#fff;"></div>
<svg style="left:1103px;top:862.9px" width="20" height="20" viewBox="0 0 20 20"><circle cx="10" cy="10" r="7.6" fill="none" stroke="#137333" stroke-width="1.7"/><path d="M6.2 10.2l2.6 2.6 5-5" fill="none" stroke="#137333" stroke-width="1.7"/></svg>
<svg style="left:1135.3px;top:871.0999999999999px" width="7.8" height="4.4" viewBox="0 0 7.8 4.4"><path d="M0 0H7.8L3.9 4.4z" fill="#5f6368"/></svg>
<div class="t" style="top:908.19px;font-size:11px;color:#5f6368;-webkit-text-stroke:0.3px #5f6368;letter-spacing:0.885px;left:927px;">COUNTRY</div>
<div class="a" style="left:927px;top:921.8px;width:59.5px;height:1.2px;background-image:linear-gradient(90deg,#5f6368 3px,transparent 3px);background-size:5px 1.2px;"></div>
<div class="t" style="top:908.19px;font-size:11px;color:#5f6368;-webkit-text-stroke:0.3px #5f6368;letter-spacing:0.974px;right:537.63px;text-align:right;">ACTIVE USERS</div>
<div class="a" style="left:1065.0px;top:921.8px;width:91.4px;height:1.2px;background-image:linear-gradient(90deg,#5f6368 3px,transparent 3px);background-size:5px 1.2px;"></div>
<div class="a" style="left:927px;top:929px;width:229.4000000000001px;height:1px;background:#dadce0;"></div>
<div class="t" style="top:939.20px;font-size:13px;color:#3c4043;-webkit-text-stroke:0.4px #3c4043;letter-spacing:-0.112px;left:927px;">United States</div>
<div class="t" style="top:939.03px;font-size:13.2px;color:#3c4043;right:598.00px;text-align:right;">6.9K</div>
<div class="t" style="top:939.89px;font-size:11px;color:#3c4043;letter-spacing:-0.150px;right:538.75px;text-align:right;">13.3%</div>
<svg style="left:1116.8115625px;top:941.1px" width="7" height="8.8" viewBox="0 0 7 8.8"><path fill="#137333" d="M3.5 0L6.8 3.6H4.4V8.8H2.6V3.6H0.2z"/></svg>
<div class="a" style="left:927px;top:962.1px;width:229.4000000000001px;height:1px;background:#dadce0;"></div>
<div class="a" style="left:928px;top:960.9px;width:117px;height:2.1px;background:#1d66e0;border-radius:1px;"></div>
<div class="t" style="top:971.20px;font-size:13px;color:#3c4043;-webkit-text-stroke:0.4px #3c4043;letter-spacing:-0.507px;left:927px;">Canada</div>
<div class="t" style="top:971.03px;font-size:13.2px;color:#3c4043;right:598.00px;text-align:right;">1.5K</div>
<div class="t" style="top:971.89px;font-size:11px;color:#3c4043;letter-spacing:-0.150px;right:538.75px;text-align:right;">22.6%</div>
<svg style="left:1116.8115625px;top:973.1px" width="7" height="8.8" viewBox="0 0 7 8.8"><path fill="#137333" d="M3.5 0L6.8 3.6H4.4V8.8H2.6V3.6H0.2z"/></svg>
<div class="a" style="left:927px;top:994.1px;width:229.4000000000001px;height:1px;background:#dadce0;"></div>
<div class="a" style="left:928px;top:992.9px;width:26px;height:2.1px;background:#1d66e0;border-radius:1px;"></div>
<div class="t" style="top:1003.20px;font-size:13px;color:#3c4043;-webkit-text-stroke:0.4px #3c4043;letter-spacing:-0.047px;left:927px;">India</div>
<div class="t" style="top:1003.03px;font-size:13.2px;color:#3c4043;right:598.00px;text-align:right;">1.4K</div>
<div class="t" style="top:1003.89px;font-size:11px;color:#3c4043;letter-spacing:-0.150px;right:538.75px;text-align:right;">21.0%</div>
<svg style="left:1116.8115625px;top:1005.1px" width="7" height="8.8" viewBox="0 0 7 8.8"><path fill="#137333" d="M3.5 0L6.8 3.6H4.4V8.8H2.6V3.6H0.2z"/></svg>
<div class="a" style="left:927px;top:1026.1px;width:229.4000000000001px;height:1px;background:#dadce0;"></div>
<div class="a" style="left:928px;top:1024.9px;width:23px;height:2.1px;background:#1d66e0;border-radius:1px;"></div>
<div class="t" style="top:1035.20px;font-size:13px;color:#3c4043;-webkit-text-stroke:0.4px #3c4043;letter-spacing:-0.366px;left:927px;">China</div>
<div class="t" style="top:1035.03px;font-size:13.2px;color:#3c4043;right:598.00px;text-align:right;">496</div>
<div class="t" style="top:1035.89px;font-size:11px;color:#3c4043;letter-spacing:-0.150px;right:538.75px;text-align:right;">25.3%</div>
<svg style="left:1116.8115625px;top:1037.1000000000001px" width="7" height="8.8" viewBox="0 0 7 8.8"><path fill="#137333" d="M3.5 0L6.8 3.6H4.4V8.8H2.6V3.6H0.2z"/></svg>
<div class="a" style="left:927px;top:1058.1000000000001px;width:229.4000000000001px;height:1px;background:#dadce0;"></div>
<div class="a" style="left:928px;top:1056.9px;width:9px;height:2.1px;background:#1d66e0;border-radius:1px;"></div>
<div class="t" style="top:1067.20px;font-size:13px;color:#3c4043;-webkit-text-stroke:0.4px #3c4043;letter-spacing:-0.104px;left:927px;">Japan</div>
<div class="t" style="top:1067.03px;font-size:13.2px;color:#3c4043;right:598.00px;text-align:right;">380</div>
<div class="t" style="top:1067.89px;font-size:11px;color:#3c4043;letter-spacing:-0.150px;right:538.75px;text-align:right;">12.8%</div>
<svg style="left:1116.8115625px;top:1069.1000000000001px" width="7" height="8.8" viewBox="0 0 7 8.8"><path fill="#137333" d="M3.5 0L6.8 3.6H4.4V8.8H2.6V3.6H0.2z"/></svg>
<div class="a" style="left:927px;top:1090.1000000000001px;width:229.4000000000001px;height:1px;background:#dadce0;"></div>
<div class="a" style="left:928px;top:1088.9px;width:6px;height:2.1px;background:#1d66e0;border-radius:1px;"></div>
<div class="t" style="top:1099.20px;font-size:13px;color:#3c4043;-webkit-text-stroke:0.4px #3c4043;letter-spacing:0.173px;left:927px;">South Korea</div>
<div class="t" style="top:1099.03px;font-size:13.2px;color:#3c4043;right:598.00px;text-align:right;">244</div>
<div class="t" style="top:1099.89px;font-size:11px;color:#3c4043;letter-spacing:-0.150px;right:538.75px;text-align:right;">7.0%</div>
<svg style="left:1122.77859375px;top:1101.1000000000001px" width="7" height="8.8" viewBox="0 0 7 8.8"><path fill="#137333" d="M3.5 0L6.8 3.6H4.4V8.8H2.6V3.6H0.2z"/></svg>
<div class="a" style="left:927px;top:1122.1000000000001px;width:229.4000000000001px;height:1px;background:#dadce0;"></div>
<div class="a" style="left:928px;top:1120.9px;width:4px;height:2.1px;background:#1d66e0;border-radius:1px;"></div>
<div class="t" style="top:1131.20px;font-size:13px;color:#3c4043;-webkit-text-stroke:0.4px #3c4043;letter-spacing:-0.093px;left:927px;">Taiwan</div>
<div class="t" style="top:1131.03px;font-size:13.2px;color:#3c4043;right:598.00px;text-align:right;">202</div>
<div class="t" style="top:1131.89px;font-size:11px;color:#3c4043;letter-spacing:-0.150px;right:538.75px;text-align:right;">18.1%</div>
<svg style="left:1116.8115625px;top:1133.1000000000001px" width="7" height="8.8" viewBox="0 0 7 8.8"><path fill="#137333" d="M3.5 0L6.8 3.6H4.4V8.8H2.6V3.6H0.2z"/></svg>
<div class="a" style="left:928px;top:1152.9px;width:3px;height:2.1px;background:#1d66e0;border-radius:1px;"></div>
<div class="t" style="top:1202.04px;font-size:13.3px;color:#5f6368;letter-spacing:-0.111px;left:589.1px;">Last 7 days</div>
<svg style="left:669px;top:1207px" width="7.8" height="4" viewBox="0 0 7.8 4"><path d="M0 0H7.8L3.9 4z" fill="#5f6368"/></svg>
<div class="t" style="top:1202.10px;font-size:15px;color:#1d66e0;-webkit-text-stroke:0.25px #1d66e0;letter-spacing:0.010px;left:1040px;">View countries</div>
<svg style="left:1148px;top:1203px" width="14" height="14" viewBox="0 0 14 14"><path d="M1 7h11.2M6.8 1.6L12.2 7l-5.4 5.4" fill="none" stroke="#1d66e0" stroke-width="1.6"/></svg>
<svg style="left:0;top:0" width="1695" height="1225">
<polygon points="752.0,1021.0 753.0,1014.0 760.0,1008.0 778.0,1000.0 788.0,1013.0 789.0,1019.0 776.0,1019.0 762.0,1020.0" fill="#a9c8fa"/>
<polygon points="786.0,1026.0 800.0,1022.0 812.0,1024.0 822.0,1030.0 822.0,1040.0 811.0,1041.0 805.0,1045.0 796.0,1053.0 788.0,1037.0" fill="#4683ec"/>
<polygon points="808.0,1018.0 826.0,1012.0 840.0,1020.0 836.0,1040.0 822.0,1040.0 812.0,1026.0" fill="#1f5bcf"/>
<polygon points="618.4,989.8 621.7,983.2 625.5,975.6 633.0,973.2 644.4,977.5 637.8,992.6 631.2,991.6 624.5,993.5 619.8,991.6" fill="#1b479d" stroke="#fff" stroke-width="0.6" stroke-linejoin="round"/>
<polygon points="644.4,978.0 652.9,979.4 664.2,984.1 673.6,983.2 682.1,984.1 685.0,987.9 680.2,991.6 674.6,998.3 678.3,1003.0 683.1,1008.6 685.9,1004.9 689.7,996.4 695.3,1001.1 700.1,1003.0 704.8,1008.6 701.9,1012.4 694.4,1013.4 687.8,1018.1 680.2,1021.9 678.3,1017.1 668.9,1013.4 645.3,1011.5 643.4,1004.9 641.5,995.4 637.8,992.6" fill="#1b479d" stroke="#fff" stroke-width="0.6" stroke-linejoin="round"/>
<polygon points="674.6,998.3 680.2,991.6 685.0,989.8 689.7,996.4 685.9,1004.9 683.1,1008.6 678.3,1003.0" fill="#ffffff"/>
<polygon points="687.8,961.4 699.1,957.7 711.4,958.6 700.1,968.0 690.6,969.9" fill="#1b479d" stroke="#fff" stroke-width="0.6" stroke-linejoin="round"/>
<polygon points="660.4,974.7 666.1,970.9 673.6,976.5 671.7,981.3 664.2,979.4" fill="#1b479d" stroke="#fff" stroke-width="0.6" stroke-linejoin="round"/>
<polygon points="686.8,975.6 694.4,976.5 702.9,989.8 698.2,993.5 690.6,986.0" fill="#1b479d" stroke="#fff" stroke-width="0.6" stroke-linejoin="round"/>
<polygon points="666.1,966.2 671.7,965.2 675.5,970.9 668.0,969.9" fill="#1b479d" stroke="#fff" stroke-width="0.6" stroke-linejoin="round"/>
<polygon points="678.3,968.0 685.0,969.9 683.1,974.7 679.3,973.7" fill="#1b479d" stroke="#fff" stroke-width="0.6" stroke-linejoin="round"/>
<polygon points="674.6,974.7 681.2,975.6 685.0,982.2 679.3,983.2 673.6,980.3" fill="#1b479d" stroke="#fff" stroke-width="0.6" stroke-linejoin="round"/>
<polygon points="652.9,976.5 658.5,975.6 662.3,982.2 655.7,981.3" fill="#1b479d" stroke="#fff" stroke-width="0.6" stroke-linejoin="round"/>
<polygon points="684.0,964.3 690.6,970.9 685.0,973.7" fill="#1b479d" stroke="#fff" stroke-width="0.6" stroke-linejoin="round"/>
<polygon points="694.4,970.9 700.1,973.7 695.3,976.5" fill="#1b479d" stroke="#fff" stroke-width="0.6" stroke-linejoin="round"/>
<polygon points="612.3,978.4 615.1,975.6 617.9,980.3 614.2,982.2" fill="#1f5bcf" stroke="#fff" stroke-width="0.6" stroke-linejoin="round"/>
<polygon points="645.3,1012.4 668.9,1013.8 678.3,1017.1 680.2,1022.3 687.8,1018.1 694.4,1013.4 692.5,1020.0 685.0,1025.6 682.1,1030.3 676.5,1035.1 677.4,1039.8 673.6,1035.1 666.1,1035.1 660.4,1037.9 653.8,1033.2 646.3,1032.2 642.5,1027.5 642.0,1018.1" fill="#1b479d" stroke="#fff" stroke-width="0.6" stroke-linejoin="round"/>
<polygon points="701.9,1013.4 705.7,1017.1 702.9,1017.1" fill="#1f5bcf" stroke="#fff" stroke-width="0.6" stroke-linejoin="round"/>
<polygon points="703.8,967.1 713.3,961.4 732.2,958.6 743.5,963.3 737.8,970.9 735.0,980.3 722.7,991.6 716.1,998.3 712.3,989.8 710.4,973.7" fill="#d6d6d6" stroke="#fff" stroke-width="0.6" stroke-linejoin="round"/>
<polygon points="735.9,991.6 741.6,991.6 740.6,993.5 736.9,993.5" fill="#d6d6d6"/>
<polygon points="647.2,1033.2 654.7,1033.7 660.4,1037.9 661.4,1042.6 666.1,1047.3 668.9,1046.4 666.1,1050.2 659.5,1048.3 653.8,1042.6 650.0,1037.0" fill="#1f5bcf" stroke="#fff" stroke-width="0.6" stroke-linejoin="round"/>
<polygon points="651.0,1040.0 660.6,1040.0 662.0,1045.9 665.7,1048.1 669.4,1046.6 667.2,1050.3 659.1,1049.6 654.7,1046.6" fill="#1f5bcf" stroke="#fff" stroke-width="0.6" stroke-linejoin="round"/>
<polygon points="665.7,1050.3 671.6,1052.5 672.7,1055.8 669.4,1054.3" fill="#1f5bcf" stroke="#fff" stroke-width="0.3" stroke-linejoin="round"/>
<polygon points="679.7,1058.4 682.6,1056.2 687.0,1061.3 687.0,1066.5 684.1,1069.4 679.7,1067.9 677.5,1065.7" fill="#1f5bcf" stroke="#fff" stroke-width="0.6" stroke-linejoin="round"/>
<polygon points="684.1,1056.9 694.4,1057.6 694.4,1061.3 690.0,1064.2 687.0,1062.0" fill="#7eabf5" stroke="#fff" stroke-width="0.6" stroke-linejoin="round"/>
<polygon points="695.8,1060.6 702.5,1062.0 702.5,1065.0 695.8,1064.2" fill="#d6d6d6" stroke="#fff" stroke-width="0.3" stroke-linejoin="round"/>
<polygon points="676.0,1067.2 680.0,1067.9 681.1,1069.4 676.7,1071.6" fill="#1f5bcf" stroke="#fff" stroke-width="0.6" stroke-linejoin="round"/>
<polygon points="675.3,1072.3 683.4,1069.4 684.8,1075.3 687.0,1076.7 687.0,1084.1 681.1,1081.9 678.2,1076.7" fill="#1f5bcf" stroke="#fff" stroke-width="0.6" stroke-linejoin="round"/>
<polygon points="684.1,1072.3 687.0,1066.5 692.9,1063.5 703.2,1065.0 706.1,1069.4 719.4,1073.8 716.4,1081.1 714.2,1087.8 707.6,1091.4 706.1,1098.0 701.7,1099.5 698.8,1092.9 697.3,1084.8 691.4,1078.2 687.0,1076.7" fill="#1f5bcf" stroke="#fff" stroke-width="0.6" stroke-linejoin="round"/>
<polygon points="687.0,1077.5 691.4,1078.2 697.3,1084.8 694.4,1088.5 688.5,1088.5 687.8,1084.1" fill="#7eabf5" stroke="#fff" stroke-width="0.6" stroke-linejoin="round"/>
<polygon points="694.4,1087.8 698.8,1088.5 702.5,1093.6 700.2,1095.8 695.8,1091.4" fill="#a9c8fa" stroke="#fff" stroke-width="0.6" stroke-linejoin="round"/>
<polygon points="687.0,1084.1 688.6,1091.4 687.9,1113.5 690.7,1124.5 694.0,1127.8 688.5,1122.3 686.9,1106.1" fill="#4683ec" stroke="#fff" stroke-width="0.3" stroke-linejoin="round"/>
<polygon points="690.0,1090.7 694.4,1090.0 698.8,1093.6 701.7,1097.3 699.5,1101.0 701.0,1104.7 695.8,1109.1 694.4,1116.4 692.9,1123.0 690.7,1122.3 688.9,1106.1 688.5,1091.4" fill="#1f5bcf" stroke="#fff" stroke-width="0.6" stroke-linejoin="round"/>
<polygon points="700.2,1098.8 703.9,1100.2 702.5,1102.5 700.2,1101.7" fill="#7eabf5" stroke="#fff" stroke-width="0.6" stroke-linejoin="round"/>
<polygon points="758.5,997.2 764.4,990.7 769.0,986.1 774.2,983.5 775.5,984.8 771.6,987.4 767.7,991.4 765.7,996.6 763.1,1000.5 759.8,1001.8" fill="#4683ec" stroke="#fff" stroke-width="0.6" stroke-linejoin="round"/>
<polygon points="764.4,996.6 767.7,988.1 770.9,987.4 770.3,992.7 767.0,1000.5 765.7,1005.1 763.7,1003.1" fill="#4683ec" stroke="#fff" stroke-width="0.6" stroke-linejoin="round"/>
<polygon points="771.6,996.6 772.9,986.1 775.5,984.8 777.5,989.4 778.1,996.6 774.2,999.2" fill="#4683ec" stroke="#fff" stroke-width="0.6" stroke-linejoin="round"/>
<polygon points="776.8,986.1 784.6,988.1 785.9,992.7 780.7,992.7 778.1,996.6 777.5,999.2" fill="#1f5bcf" stroke="#fff" stroke-width="0.6" stroke-linejoin="round"/>
<polygon points="761.1,967.2 770.3,965.2 765.7,971.1" fill="#4683ec" stroke="#fff" stroke-width="0.3" stroke-linejoin="round"/>
<polygon points="793.8,979.6 797.7,972.4 801.6,971.1 796.4,975.7 795.1,981.6" fill="#1f5bcf" stroke="#fff" stroke-width="0.3" stroke-linejoin="round"/>
<polygon points="805.5,978.3 807.5,979.6 811.4,987.4 810.1,988.7" fill="#1f5bcf" stroke="#fff" stroke-width="0.3" stroke-linejoin="round"/>
<polygon points="736.3,991.4 741.5,992.0 740.2,994.0 737.0,994.0" fill="#d6d6d6"/>
<polygon points="777.5,1000.5 784.6,992.0 791.8,987.4 800.3,984.8 806.8,978.9 810.8,984.8 816.0,977.0 827.7,967.2 839.5,968.5 839.5,1009.6 829.1,1012.9 819.3,1007.0 812.1,1005.7 805.5,1009.0 796.4,1011.6 793.8,1015.5 791.2,1020.7 787.3,1018.8 780.7,1009.6" fill="#1f5bcf"/>
<polygon points="795.1,1013.6 805.5,1008.3 812.1,1005.7 819.3,1007.0 829.1,1012.9 826.4,1020.1 816.6,1022.1 812.1,1022.7 803.6,1020.1 797.7,1017.5" fill="#4683ec" stroke="#fff" stroke-width="0.6" stroke-linejoin="round"/>
<polygon points="749.4,1003.8 753.9,1010.9 752.6,1012.3 750.0,1011.6 751.3,1009.6" fill="#1f5bcf" stroke="#fff" stroke-width="0.3" stroke-linejoin="round"/>
<polygon points="745.8,1008.3 747.7,1008.3 747.4,1010.9 745.8,1010.6" fill="#4683ec" stroke="#fff" stroke-width="0.3" stroke-linejoin="round"/>
<polygon points="751.3,1015.5 755.9,1013.6 759.8,1016.8 758.5,1022.1 753.9,1022.1 752.6,1018.8" fill="#1f5bcf" stroke="#fff" stroke-width="0.6" stroke-linejoin="round"/>
<polygon points="746.8,1022.7 753.9,1023.4 752.6,1028.6 748.1,1029.2 745.5,1027.3" fill="#1f5bcf" stroke="#fff" stroke-width="0.6" stroke-linejoin="round"/>
<polygon points="759.8,1009.0 765.0,1008.3 765.7,1014.9 760.5,1015.5" fill="#1f5bcf" stroke="#fff" stroke-width="0.6" stroke-linejoin="round"/>
<polygon points="766.4,1008.3 772.9,1009.0 772.9,1013.6 767.7,1013.6" fill="#1f5bcf" stroke="#fff" stroke-width="0.6" stroke-linejoin="round"/>
<polygon points="773.5,1005.7 780.1,1005.7 780.7,1010.9 774.2,1011.6" fill="#7eabf5" stroke="#fff" stroke-width="0.6" stroke-linejoin="round"/>
<polygon points="759.8,1016.2 766.4,1014.2 771.6,1016.8 771.6,1022.7 767.7,1025.3 763.1,1025.3 761.1,1021.4" fill="#a9c8fa" stroke="#fff" stroke-width="0.6" stroke-linejoin="round"/>
<polygon points="774.2,1012.3 780.7,1012.3 787.9,1014.2 784.6,1018.1 775.5,1016.2" fill="#1f5bcf" stroke="#fff" stroke-width="0.6" stroke-linejoin="round"/>
<polygon points="772.2,1016.8 777.5,1016.8 778.1,1020.7 772.9,1020.7" fill="#7eabf5" stroke="#fff" stroke-width="0.6" stroke-linejoin="round"/>
<polygon points="778.1,1026.0 784.6,1024.7 792.5,1025.3 792.5,1027.9 780.7,1028.6" fill="#1f5bcf" stroke="#fff" stroke-width="0.6" stroke-linejoin="round"/>
<polygon points="802.9,1022.7 810.1,1024.0 813.4,1028.6 804.2,1028.6" fill="#a9c8fa" stroke="#fff" stroke-width="0.6" stroke-linejoin="round"/>
<polygon points="795.7,1027.9 803.6,1028.6 809.5,1031.8 812.1,1040.0 800.3,1040.0 796.4,1033.2" fill="#4683ec" stroke="#fff" stroke-width="0.6" stroke-linejoin="round"/>
<polygon points="810.8,1029.9 818.6,1028.6 817.3,1035.1 812.1,1034.5" fill="#7eabf5" stroke="#fff" stroke-width="0.6" stroke-linejoin="round"/>
<polygon points="802.9,1018.8 813.4,1022.7 821.9,1020.7 825.1,1025.3 819.9,1028.6 813.4,1028.6 810.1,1024.0 802.9,1022.7" fill="#a9c8fa" stroke="#fff" stroke-width="0.6" stroke-linejoin="round"/>
<polygon points="792.5,1025.3 795.7,1027.9 796.4,1033.2 792.5,1030.5 791.2,1028.6" fill="#4683ec" stroke="#fff" stroke-width="0.6" stroke-linejoin="round"/>
<polygon points="818.6,1028.6 825.1,1025.3 829.1,1029.2 827.7,1040.0 817.3,1040.0 817.3,1035.1" fill="#1f5bcf" stroke="#fff" stroke-width="0.6" stroke-linejoin="round"/>
<polygon points="813.4,1022.7 821.9,1020.7 826.4,1024.0 821.9,1025.3" fill="#7eabf5" stroke="#fff" stroke-width="0.6" stroke-linejoin="round"/>
<polygon points="825.0,968.2 834.6,969.0 835.3,972.6 850.0,973.4 853.7,976.3 859.5,972.6 870.6,974.1 885.2,974.8 886.0,972.6 892.6,974.1 897.7,984.4 893.3,990.3 888.9,991.0 887.5,987.3 882.3,989.5 870.6,994.7 868.4,1002.0 875.0,1005.0 875.7,1012.3 872.8,1016.0 869.1,1012.3 863.2,1007.9 857.3,1005.7 849.2,1011.6 839.0,1008.6 830.9,1013.0 822.8,1013.8 822.8,968.2" fill="#1f5bcf"/>
<polygon points="830.9,1013.0 839.0,1008.6 847.0,1010.8 855.9,1009.4 859.5,1014.5 852.9,1018.9 847.0,1021.9 838.2,1019.7" fill="#7eabf5" stroke="#fff" stroke-width="0.6" stroke-linejoin="round"/>
<polygon points="825.0,1021.1 830.9,1013.0 838.2,1019.7 847.0,1021.9 852.9,1018.9 859.5,1014.5 857.3,1005.7 863.2,1007.9 869.1,1012.3 872.0,1012.3 873.5,1016.0 869.1,1019.7 860.3,1024.8 864.7,1028.5 866.9,1035.8 861.7,1045.0 825.0,1045.0" fill="#1f5bcf" stroke="#fff" stroke-width="0.6" stroke-linejoin="round"/>
<polygon points="886.0,994.7 888.2,989.5 890.0,999.1 888.9,1004.2" fill="#1f5bcf" stroke="#fff" stroke-width="0.3" stroke-linejoin="round"/>
<polygon points="877.9,1024.8 882.3,1025.5 881.6,1028.5 876.4,1029.2" fill="#1f5bcf" stroke="#fff" stroke-width="0.3" stroke-linejoin="round"/>
<polygon points="879.4,1016.7 883.0,1017.5 881.6,1019.7" fill="#1f5bcf" stroke="#fff" stroke-width="0.3" stroke-linejoin="round"/>
<polygon points="737.9,1046.9 742.3,1041.0 745.3,1034.4 749.7,1031.5 761.5,1031.1 777.6,1035.1 786.4,1036.6 787.9,1044.7 792.3,1053.5 798.2,1059.4 801.5,1056.5 799.7,1062.3 793.8,1065.3 792.3,1069.7 790.8,1077.8 786.4,1091.0 783.5,1096.1 777.6,1100.5 771.0,1102.0 768.8,1094.7 765.9,1084.4 765.9,1074.1 762.9,1069.7 762.9,1065.3 757.0,1062.3 746.0,1061.6 739.4,1057.9 737.9,1052.0" fill="#d6d6d6"/>
<polygon points="745.3,1034.4 749.7,1031.5 751.5,1032.9 746.0,1037.3" fill="#1f5bcf" stroke="#fff" stroke-width="0.6" stroke-linejoin="round"/>
<polygon points="746.0,1039.6 753.4,1032.2 761.5,1031.5 762.9,1044.0 757.8,1047.6 748.2,1041.8" fill="#4683ec" stroke="#fff" stroke-width="0.6" stroke-linejoin="round"/>
<polygon points="737.9,1046.9 742.3,1041.8 746.8,1040.3 748.2,1042.5 749.0,1052.0 738.7,1052.0" fill="#d6d6d6" stroke="#fff" stroke-width="0.6" stroke-linejoin="round"/>
<polygon points="747.5,1042.5 757.0,1047.6 757.0,1053.5 749.7,1053.5 748.2,1049.1" fill="#a9c8fa" stroke="#fff" stroke-width="0.6" stroke-linejoin="round"/>
<polygon points="757.8,1047.6 764.4,1044.7 767.3,1047.6 766.6,1053.5 757.8,1053.5" fill="#a9c8fa" stroke="#fff" stroke-width="0.6" stroke-linejoin="round"/>
<polygon points="762.9,1035.1 776.1,1034.4 776.9,1046.2 768.1,1044.7 762.9,1042.5" fill="#a9c8fa" stroke="#fff" stroke-width="0.6" stroke-linejoin="round"/>
<polygon points="777.6,1035.9 785.7,1036.6 786.4,1044.7 778.4,1044.7" fill="#1f5bcf" stroke="#fff" stroke-width="0.6" stroke-linejoin="round"/>
<polygon points="768.1,1045.4 776.1,1046.9 775.4,1057.9 768.1,1059.4 766.6,1053.5" fill="#d6d6d6" stroke="#fff" stroke-width="0.6" stroke-linejoin="round"/>
<polygon points="776.9,1046.2 787.2,1045.4 787.9,1055.0 782.0,1057.2 776.1,1056.5" fill="#a9c8fa" stroke="#fff" stroke-width="0.6" stroke-linejoin="round"/>
<polygon points="787.2,1056.5 791.6,1053.5 797.5,1060.1 791.6,1062.3" fill="#4683ec" stroke="#fff" stroke-width="0.6" stroke-linejoin="round"/>
<polygon points="793.0,1064.5 798.9,1059.4 801.5,1056.5 797.5,1063.1" fill="#a9c8fa" stroke="#fff" stroke-width="0.6" stroke-linejoin="round"/>
<polygon points="768.8,1059.4 787.9,1057.2 786.4,1062.3 770.3,1062.3" fill="#d6d6d6" stroke="#fff" stroke-width="0.6" stroke-linejoin="round"/>
<polygon points="737.9,1052.0 757.0,1054.2 757.0,1056.5 756.3,1061.6 746.0,1061.6 739.4,1057.9" fill="#a9c8fa" stroke="#fff" stroke-width="0.6" stroke-linejoin="round"/>
<polygon points="740.1,1057.9 746.0,1060.9 745.3,1062.3 740.9,1060.9" fill="#d6d6d6" stroke="#fff" stroke-width="0.3" stroke-linejoin="round"/>
<polygon points="757.0,1055.0 765.9,1055.0 764.4,1061.6 759.2,1061.6" fill="#1f5bcf" stroke="#fff" stroke-width="0.6" stroke-linejoin="round"/>
<polygon points="762.9,1060.9 766.6,1059.4 767.3,1063.8" fill="#4683ec" stroke="#fff" stroke-width="0.6" stroke-linejoin="round"/>
<polygon points="762.9,1065.3 769.5,1063.8 768.8,1071.1 763.7,1069.7" fill="#d6d6d6" stroke="#fff" stroke-width="0.6" stroke-linejoin="round"/>
<polygon points="770.3,1063.8 782.0,1063.1 782.8,1068.2 781.3,1077.0 776.1,1075.6 769.5,1071.1" fill="#7eabf5" stroke="#fff" stroke-width="0.6" stroke-linejoin="round"/>
<polygon points="787.9,1063.1 792.3,1063.8 792.3,1069.7 787.9,1067.5" fill="#1f5bcf" stroke="#fff" stroke-width="0.6" stroke-linejoin="round"/>
<polygon points="783.5,1064.5 786.4,1064.5 785.7,1067.5" fill="#4683ec" stroke="#fff" stroke-width="0.6" stroke-linejoin="round"/>
<polygon points="783.5,1069.7 789.4,1069.7 790.8,1077.0 785.0,1077.0" fill="#a9c8fa" stroke="#fff" stroke-width="0.6" stroke-linejoin="round"/>
<polygon points="765.9,1074.1 774.7,1074.8 774.7,1082.9 765.9,1082.9" fill="#d6d6d6" stroke="#fff" stroke-width="0.6" stroke-linejoin="round"/>
<polygon points="774.7,1078.5 783.5,1077.0 782.0,1082.9 776.1,1083.6" fill="#a9c8fa" stroke="#fff" stroke-width="0.6" stroke-linejoin="round"/>
<polygon points="785.0,1077.8 791.6,1080.0 786.4,1091.0 782.0,1084.4" fill="#d6d6d6" stroke="#fff" stroke-width="0.6" stroke-linejoin="round"/>
<polygon points="765.9,1084.4 773.2,1084.4 771.7,1096.1 768.8,1094.7" fill="#d6d6d6" stroke="#fff" stroke-width="0.6" stroke-linejoin="round"/>
<polygon points="773.2,1085.8 779.1,1085.8 779.8,1091.0 773.2,1091.7" fill="#a9c8fa" stroke="#fff" stroke-width="0.6" stroke-linejoin="round"/>
<polygon points="779.1,1083.6 783.5,1082.9 784.2,1088.0 779.8,1088.0" fill="#a9c8fa" stroke="#fff" stroke-width="0.6" stroke-linejoin="round"/>
<polygon points="770.3,1096.9 776.1,1093.2 782.0,1090.2 783.5,1096.1 777.6,1100.5 771.0,1102.0" fill="#1f5bcf" stroke="#fff" stroke-width="0.6" stroke-linejoin="round"/>
<polygon points="795.2,1090.2 800.4,1080.7 800.4,1084.4 796.7,1091.7" fill="#a9c8fa" stroke="#fff" stroke-width="0.6" stroke-linejoin="round"/>
<polygon points="787.9,1037.3 793.0,1035.9 805.5,1044.7 804.1,1047.6 796.0,1049.1 790.8,1044.0" fill="#1f5bcf" stroke="#fff" stroke-width="0.6" stroke-linejoin="round"/>
<polygon points="795.2,1050.6 802.6,1049.1 801.1,1052.0 796.0,1053.5" fill="#a9c8fa" stroke="#fff" stroke-width="0.6" stroke-linejoin="round"/>
<polygon points="805.5,1044.7 808.5,1044.0 807.7,1048.4" fill="#4683ec" stroke="#fff" stroke-width="0.3" stroke-linejoin="round"/>
<polygon points="796.0,1030.0 808.5,1030.0 811.4,1040.3 804.1,1039.6 798.2,1035.9" fill="#4683ec" stroke="#fff" stroke-width="0.6" stroke-linejoin="round"/>
<polygon points="811.4,1030.0 821.7,1030.0 818.8,1040.3 814.4,1039.6" fill="#1f5bcf" stroke="#fff" stroke-width="0.6" stroke-linejoin="round"/>
<polygon points="786.4,1030.0 796.0,1030.0 798.2,1035.9 790.8,1032.9" fill="#4683ec" stroke="#fff" stroke-width="0.6" stroke-linejoin="round"/>
<polygon points="808.5,1030.0 813.6,1030.0 817.3,1034.4 812.9,1035.9" fill="#7eabf5" stroke="#fff" stroke-width="0.6" stroke-linejoin="round"/>
<polygon points="820.0,1040.6 823.3,1034.9 829.0,1036.5 837.1,1042.2 830.6,1051.2 828.2,1057.8 824.9,1051.2 820.0,1045.5" fill="#1f5bcf" stroke="#fff" stroke-width="0.6" stroke-linejoin="round"/>
<polygon points="811.8,1030.0 826.5,1030.0 829.0,1036.5 823.3,1034.9 820.0,1040.6 811.8,1039.8" fill="#1f5bcf" stroke="#fff" stroke-width="0.6" stroke-linejoin="round"/>
<polygon points="842.0,1042.2 846.1,1039.0 847.8,1046.3 844.5,1049.6" fill="#a9c8fa" stroke="#fff" stroke-width="0.6" stroke-linejoin="round"/>
<polygon points="847.8,1047.1 852.7,1044.7 855.1,1051.2 854.3,1055.3 850.2,1052.9" fill="#1f5bcf" stroke="#fff" stroke-width="0.6" stroke-linejoin="round"/>
<polygon points="846.1,1061.8 852.7,1065.1 855.9,1071.6 853.5,1071.6 847.8,1064.3" fill="#1f5bcf" stroke="#fff" stroke-width="0.3" stroke-linejoin="round"/>
<polygon points="860.0,1067.6 865.7,1062.7 867.4,1061.0 865.7,1069.2 861.6,1070.0" fill="#1f5bcf" stroke="#fff" stroke-width="0.6" stroke-linejoin="round"/>
<polygon points="885.3,1070.0 888.6,1070.0 889.4,1074.9 886.1,1074.1" fill="#1f5bcf" stroke="#fff" stroke-width="0.3" stroke-linejoin="round"/>
<polygon points="890.2,1070.8 893.5,1072.5 896.7,1077.4 891.0,1075.7" fill="#d6d6d6"/>
<polygon points="860.8,1092.1 865.7,1088.8 870.6,1087.2 875.5,1082.3 882.1,1079.8 884.5,1082.3 887.8,1086.3 890.2,1079.0 893.5,1087.2 896.7,1093.7 896.7,1099.4 891.9,1106.7 887.0,1110.0 882.9,1109.2 880.4,1103.5 875.5,1101.9 869.0,1101.9 861.6,1103.5 860.8,1097.0" fill="#1f5bcf" stroke="#fff" stroke-width="0.6" stroke-linejoin="round"/>
<polygon points="884.5,1114.1 887.4,1113.7 885.3,1116.1" fill="#1f5bcf"/>
<polygon points="902.5,1121.4 909.8,1115.7 915.5,1111.6 913.1,1114.5 903.3,1122.3" fill="#1f5bcf"/>
</svg>
<div class="a" style="left:1196px;top:834px;width:306px;height:400px;background:#fff;border:1px solid #dadce0;border-radius:8px;box-sizing:border-box;"></div>
<div class="t" style="top:863.00px;font-size:13.7px;color:#202124;-webkit-text-stroke:0.25px #202124;letter-spacing:0.633px;left:1220.6px;">Views by</div>
<div class="a" style="left:1221px;top:878.2px;width:40px;height:1.2px;background-image:linear-gradient(90deg,#5f6368 3px,transparent 3px);background-size:5px 1.2px;"></div>
<div class="t" style="top:882.90px;font-size:13.7px;color:#202124;-webkit-text-stroke:0.25px #202124;letter-spacing:0.391px;left:1220.6px;">Page title and scree…</div>
<div class="a" style="left:1221px;top:898.2px;width:133px;height:1.2px;background-image:linear-gradient(90deg,#5f6368 3px,transparent 3px);background-size:5px 1.2px;"></div>
<div class="a" style="left:1417.4px;top:859.3px;width:59.3px;height:27.2px;border:1px solid #dadce0;border-radius:14px;box-sizing:border-box;background:#fff;"></div>
<svg style="left:1423.4px;top:862.9px" width="20" height="20" viewBox="0 0 20 20"><circle cx="10" cy="10" r="7.6" fill="none" stroke="#137333" stroke-width="1.7"/><path d="M6.2 10.2l2.6 2.6 5-5" fill="none" stroke="#137333" stroke-width="1.7"/></svg>
<svg style="left:1455.7px;top:871.0999999999999px" width="7.8" height="4.4" viewBox="0 0 7.8 4.4"><path d="M0 0H7.8L3.9 4.4z" fill="#5f6368"/></svg>
<div class="t" style="top:908.19px;font-size:11px;color:#5f6368;-webkit-text-stroke:0.3px #5f6368;letter-spacing:0.961px;left:1220.6px;">PAGE TITLE AND S…</div>
<div class="a" style="left:1220.6px;top:921.8px;width:117px;height:1.2px;background-image:linear-gradient(90deg,#5f6368 3px,transparent 3px);background-size:5px 1.2px;"></div>
<div class="t" style="top:908.19px;font-size:11px;color:#5f6368;-webkit-text-stroke:0.3px #5f6368;letter-spacing:1.137px;right:217.86px;text-align:right;">VIEWS</div>
<div class="a" style="left:1435px;top:921.8px;width:41px;height:1.2px;background-image:linear-gradient(90deg,#5f6368 3px,transparent 3px);background-size:5px 1.2px;"></div>
<div class="a" style="left:1220.6px;top:929px;width:255.4000000000001px;height:1px;background:#dadce0;"></div>
<div class="t" style="top:939.20px;font-size:13px;color:#3c4043;-webkit-text-stroke:0.4px #3c4043;letter-spacing:-0.025px;left:1220.6px;">Home</div>
<div class="t" style="top:939.03px;font-size:13.2px;color:#3c4043;right:284.00px;text-align:right;">17K</div>
<div class="t" style="top:939.89px;font-size:11px;color:#3c4043;letter-spacing:-0.150px;right:219.15px;text-align:right;">14.3%</div>
<svg style="left:1436.4115625px;top:941.1px" width="7" height="8.8" viewBox="0 0 7 8.8"><path fill="#137333" d="M3.5 0L6.8 3.6H4.4V8.8H2.6V3.6H0.2z"/></svg>
<div class="a" style="left:1220.6px;top:962.1px;width:255.4000000000001px;height:1px;background:#dadce0;"></div>
<div class="a" style="left:1221.6px;top:960.9px;width:59px;height:2.1px;background:#1d66e0;border-radius:1px;"></div>
<div class="t" style="top:971.20px;font-size:13px;color:#3c4043;-webkit-text-stroke:0.4px #3c4043;letter-spacing:-0.126px;left:1220.6px;">Google Merch Shop</div>
<div class="t" style="top:971.03px;font-size:13.2px;color:#3c4043;right:284.00px;text-align:right;">5.7K</div>
<div class="t" style="top:971.89px;font-size:11px;color:#3c4043;letter-spacing:-0.150px;right:219.15px;text-align:right;">20.5%</div>
<svg style="left:1436.4115625px;top:973.1px" width="7" height="8.8" viewBox="0 0 7 8.8"><path fill="#137333" d="M3.5 0L6.8 3.6H4.4V8.8H2.6V3.6H0.2z"/></svg>
<div class="a" style="left:1220.6px;top:994.1px;width:255.4000000000001px;height:1px;background:#dadce0;"></div>
<div class="a" style="left:1221.6px;top:992.9px;width:20px;height:2.1px;background:#1d66e0;border-radius:1px;"></div>
<div class="t" style="top:1003.20px;font-size:13px;color:#3c4043;-webkit-text-stroke:0.4px #3c4043;letter-spacing:-0.304px;left:1220.6px;">Bags | Google Merch…</div>
<div class="t" style="top:1003.03px;font-size:13.2px;color:#3c4043;right:284.00px;text-align:right;">3K</div>
<div class="t" style="top:1003.89px;font-size:11px;color:#3c4043;letter-spacing:-0.150px;right:219.15px;text-align:right;">12.1%</div>
<svg style="left:1436.4115625px;top:1005.1px" width="7" height="8.8" viewBox="0 0 7 8.8"><path fill="#137333" d="M3.5 0L6.8 3.6H4.4V8.8H2.6V3.6H0.2z"/></svg>
<div class="a" style="left:1220.6px;top:1026.1px;width:255.4000000000001px;height:1px;background:#dadce0;"></div>
<div class="a" style="left:1221.6px;top:1024.9px;width:11px;height:2.1px;background:#1d66e0;border-radius:1px;"></div>
<div class="t" style="top:1035.20px;font-size:13px;color:#3c4043;-webkit-text-stroke:0.4px #3c4043;letter-spacing:-0.340px;left:1220.6px;">New | Google Merch …</div>
<div class="t" style="top:1035.03px;font-size:13.2px;color:#3c4043;right:284.00px;text-align:right;">3.3K</div>
<div class="t" style="top:1035.89px;font-size:11px;color:#3c4043;letter-spacing:-0.150px;right:219.15px;text-align:right;">46.0%</div>
<svg style="left:1436.4115625px;top:1037.1000000000001px" width="7" height="8.8" viewBox="0 0 7 8.8"><path fill="#137333" d="M3.5 0L6.8 3.6H4.4V8.8H2.6V3.6H0.2z"/></svg>
<div class="a" style="left:1220.6px;top:1058.1000000000001px;width:255.4000000000001px;height:1px;background:#dadce0;"></div>
<div class="a" style="left:1221.6px;top:1056.9px;width:12px;height:2.1px;background:#1d66e0;border-radius:1px;"></div>
<div class="t" style="top:1067.20px;font-size:13px;color:#3c4043;-webkit-text-stroke:0.4px #3c4043;letter-spacing:-0.331px;left:1220.6px;">Men&#39;s / Unisex | Goo…</div>
<div class="t" style="top:1067.03px;font-size:13.2px;color:#3c4043;right:284.00px;text-align:right;">2.8K</div>
<div class="t" style="top:1067.89px;font-size:11px;color:#3c4043;letter-spacing:-0.150px;right:219.15px;text-align:right;">21.2%</div>
<svg style="left:1436.4115625px;top:1069.1000000000001px" width="7" height="8.8" viewBox="0 0 7 8.8"><path fill="#137333" d="M3.5 0L6.8 3.6H4.4V8.8H2.6V3.6H0.2z"/></svg>
<div class="a" style="left:1220.6px;top:1090.1000000000001px;width:255.4000000000001px;height:1px;background:#dadce0;"></div>
<div class="a" style="left:1221.6px;top:1088.9px;width:10px;height:2.1px;background:#1d66e0;border-radius:1px;"></div>
<div class="t" style="top:1099.20px;font-size:13px;color:#3c4043;-webkit-text-stroke:0.4px #3c4043;letter-spacing:-0.281px;left:1220.6px;">Apparel | Google Mer…</div>
<div class="t" style="top:1099.03px;font-size:13.2px;color:#3c4043;right:284.00px;text-align:right;">2.6K</div>
<div class="t" style="top:1099.89px;font-size:11px;color:#3c4043;letter-spacing:-0.150px;right:219.15px;text-align:right;">21.0%</div>
<svg style="left:1436.4115625px;top:1101.1000000000001px" width="7" height="8.8" viewBox="0 0 7 8.8"><path fill="#137333" d="M3.5 0L6.8 3.6H4.4V8.8H2.6V3.6H0.2z"/></svg>
<div class="a" style="left:1220.6px;top:1122.1000000000001px;width:255.4000000000001px;height:1px;background:#dadce0;"></div>
<div class="a" style="left:1221.6px;top:1120.9px;width:9px;height:2.1px;background:#1d66e0;border-radius:1px;"></div>
<div class="t" style="top:1131.20px;font-size:13px;color:#3c4043;-webkit-text-stroke:0.4px #3c4043;letter-spacing:-0.339px;left:1220.6px;">Sale | Google Merch …</div>
<div class="t" style="top:1131.03px;font-size:13.2px;color:#3c4043;right:284.00px;text-align:right;">2.6K</div>
<div class="t" style="top:1131.89px;font-size:11px;color:#3c4043;letter-spacing:-0.150px;right:219.15px;text-align:right;">80.0%</div>
<svg style="left:1436.4115625px;top:1133.1000000000001px" width="7" height="8.8" viewBox="0 0 7 8.8"><path fill="#137333" d="M3.5 0L6.8 3.6H4.4V8.8H2.6V3.6H0.2z"/></svg>
<div class="a" style="left:1221.6px;top:1152.9px;width:9px;height:2.1px;background:#1d66e0;border-radius:1px;"></div>
<div class="t" style="top:1202.04px;font-size:13.3px;color:#5f6368;letter-spacing:-0.111px;left:1229.1px;">Last 7 days</div>
<svg style="left:1309px;top:1207px" width="7.8" height="4" viewBox="0 0 7.8 4"><path d="M0 0H7.8L3.9 4z" fill="#5f6368"/></svg>
<div class="t" style="top:1202.10px;font-size:15px;color:#1d66e0;-webkit-text-stroke:0.25px #1d66e0;letter-spacing:-0.571px;left:1341px;">View pages and s…</div>
<svg style="left:1477px;top:1203px" width="14" height="14" viewBox="0 0 14 14"><path d="M1 7h11.2M6.8 1.6L12.2 7l-5.4 5.4" fill="none" stroke="#1d66e0" stroke-width="1.6"/></svg>
<div class="a" style="left:1492.5px;top:1015px;width:40px;height:40px;background:#fff;border-radius:50%;box-shadow:0 1px 3px rgba(60,64,67,.3),0 1px 2px rgba(60,64,67,.15);"></div>
<svg style="left:1504px;top:1027px" width="16" height="16" viewBox="0 0 16 16"><path d="M5.9 1.7L12.3 7.95 5.9 14.2" fill="none" stroke="#1d66e0" stroke-width="2"/></svg>
</body></html>
